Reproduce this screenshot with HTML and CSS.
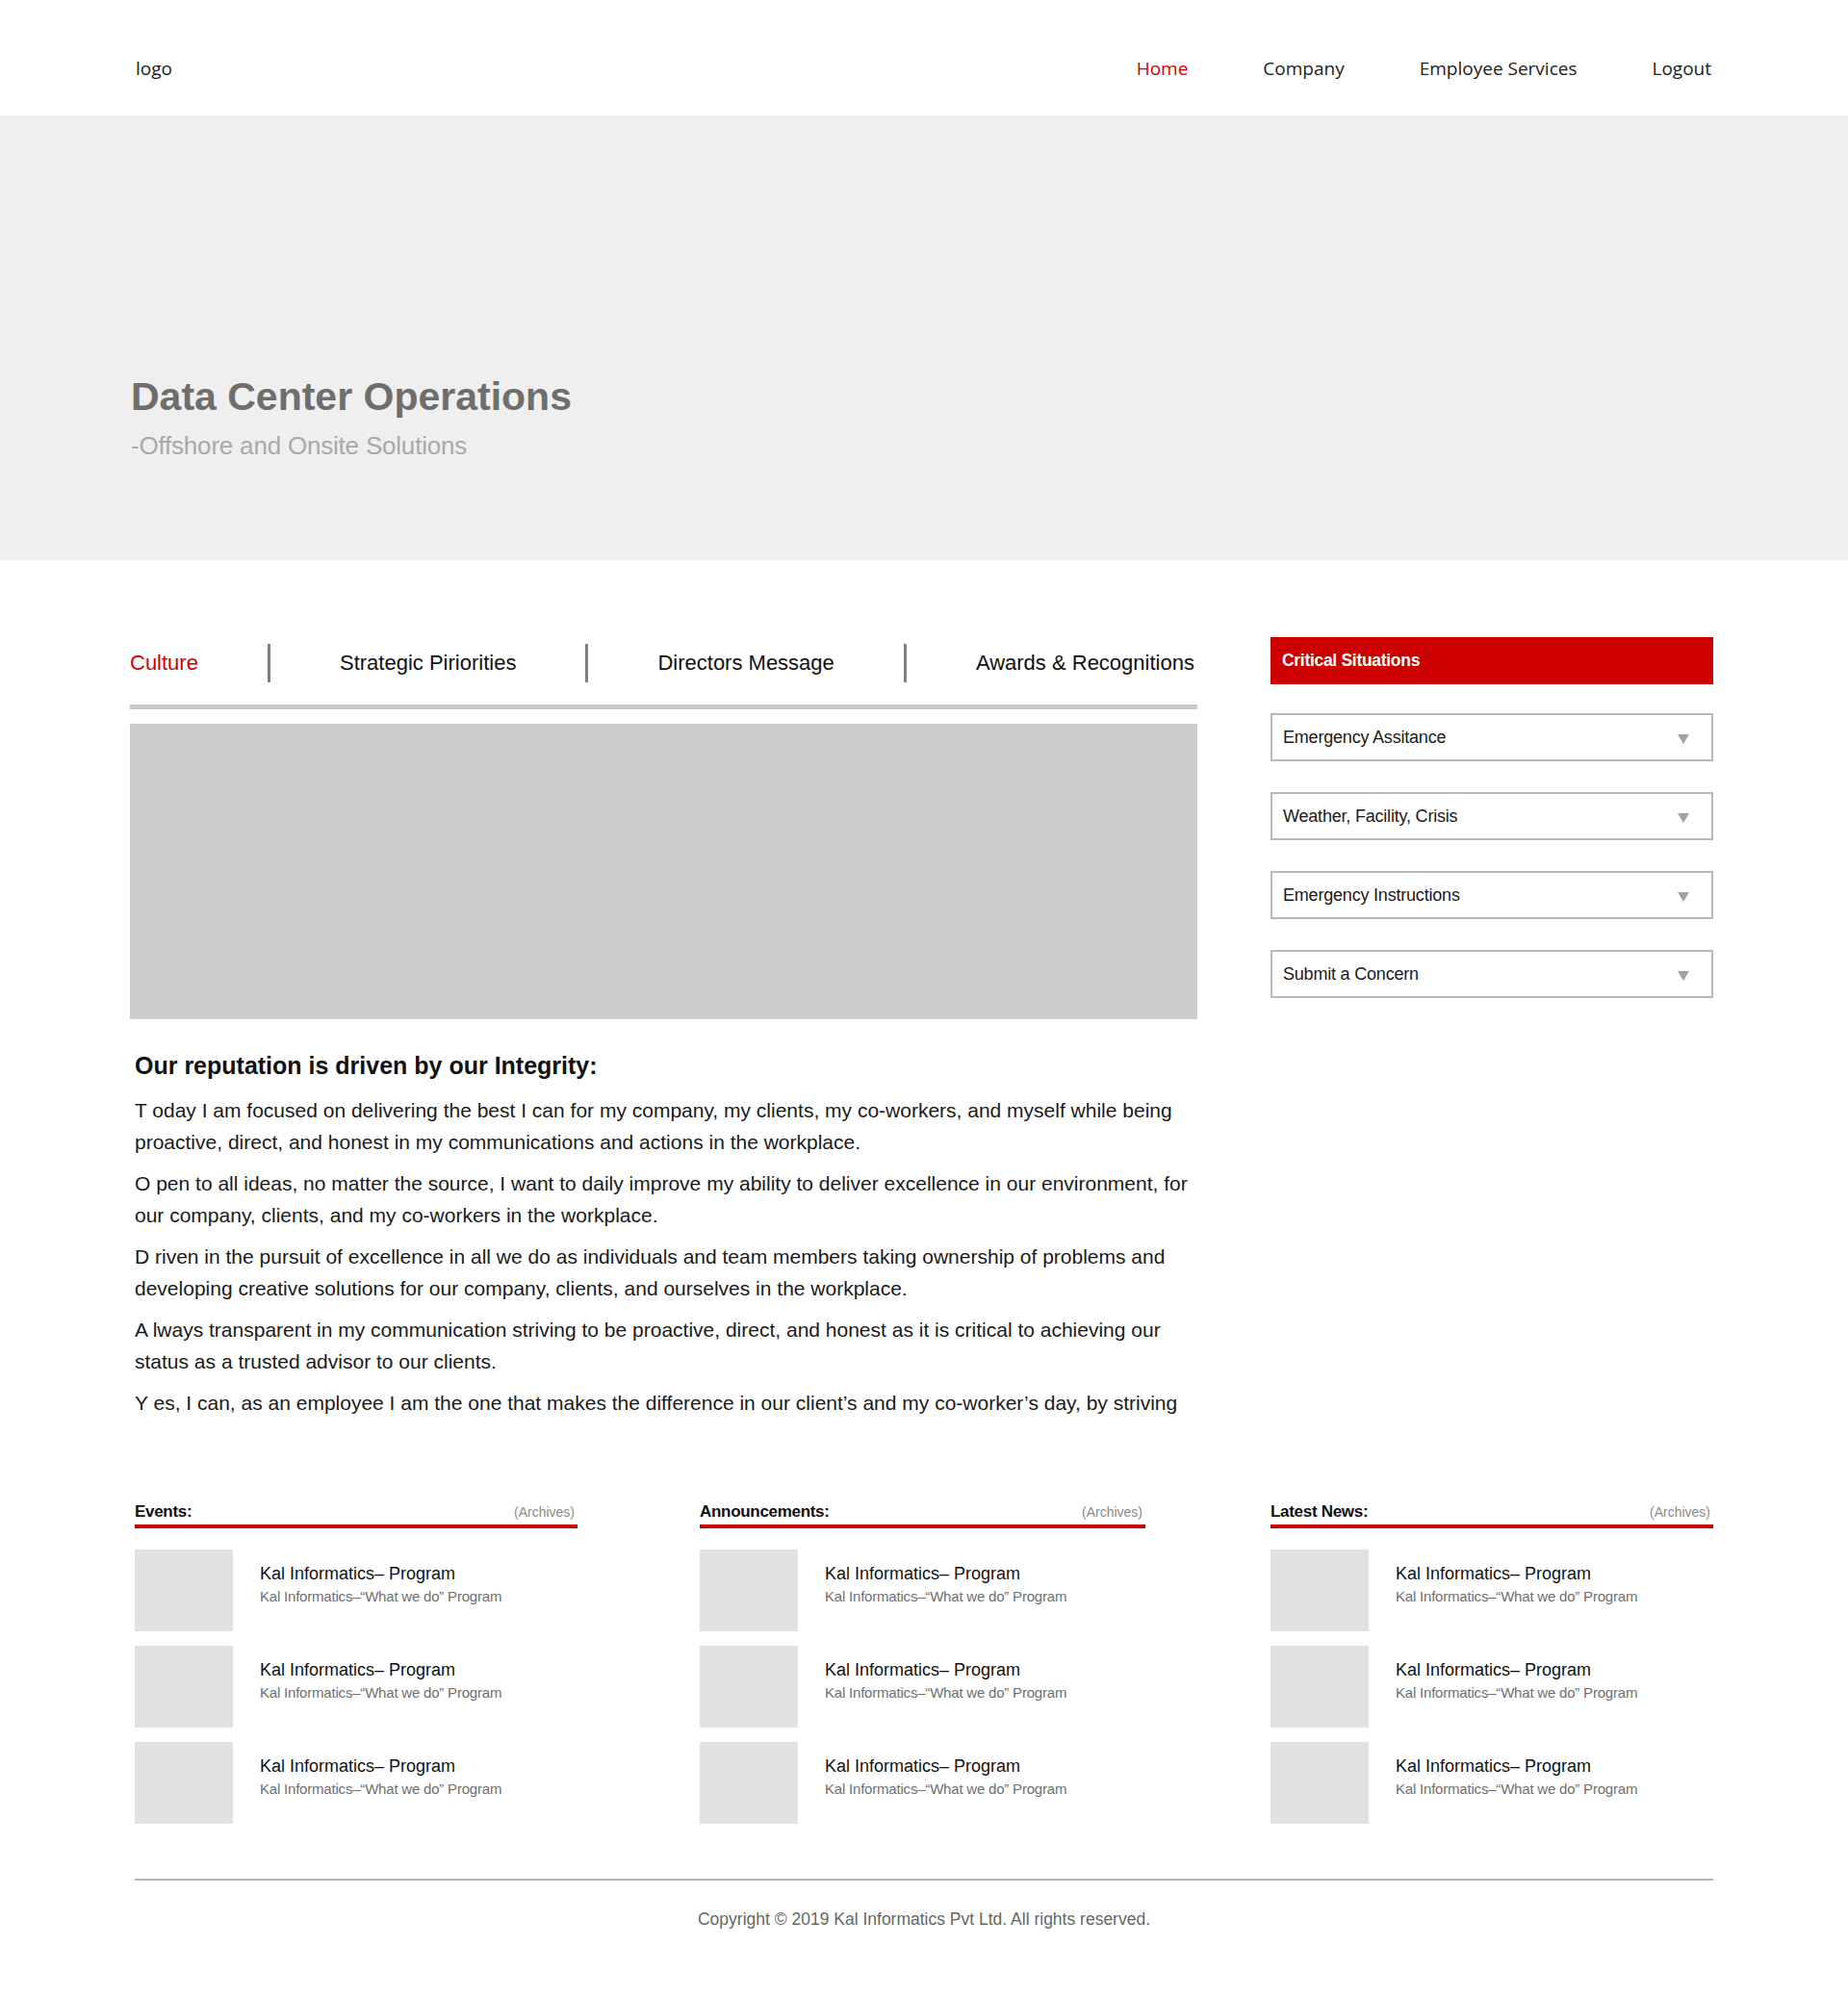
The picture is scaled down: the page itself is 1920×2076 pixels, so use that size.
FILE: index.html
```html
<!DOCTYPE html>
<html lang="en">
<head>
<meta charset="utf-8">
<title>Data Center Operations</title>
<link rel="stylesheet" href="styles.css">
</head>
<body>
<header class="site-header">
  <div class="wrap header-inner">
    <div class="logo">logo</div>
    <nav class="main-nav">
      <a class="nav-link active" href="#">Home</a>
      <a class="nav-link" href="#">Company</a>
      <a class="nav-link" href="#">Employee Services</a>
      <a class="nav-link" href="#">Logout</a>
    </nav>
  </div>
</header>

<section class="hero">
  <div class="wrap hero-inner">
    <h1 class="hero-title">Data Center Operations</h1>
    <p class="hero-sub">-Offshore and Onsite Solutions</p>
  </div>
</section>

<main class="wrap main-row">
  <div class="left-col">
    <div class="tabs">
      <span class="tab active">Culture</span>
      <span class="tab-sep"></span>
      <span class="tab">Strategic Piriorities</span>
      <span class="tab-sep"></span>
      <span class="tab">Directors Message</span>
      <span class="tab-sep"></span>
      <span class="tab">Awards &amp; Recognitions</span>
    </div>
    <div class="feature-img"></div>
    <div class="article">
      <h2 class="article-title">Our reputation is driven by our Integrity:</h2>
      <div class="article-body">
        <p>T oday I am focused on delivering the best I can for my company, my clients, my co-workers, and myself while being proactive, direct, and honest in my communications and actions in the workplace.</p>
        <p>O pen to all ideas, no matter the source, I want to daily improve my ability to deliver excellence in our environment, for our company, clients, and my co-workers in the workplace.</p>
        <p>D riven in the pursuit of excellence in all we do as individuals and team members taking ownership of problems and developing creative solutions for our company, clients, and ourselves in the workplace.</p>
        <p>A lways transparent in my communication striving to be proactive, direct, and honest as it is critical to achieving our status as a trusted advisor to our clients.</p>
        <p>Y es, I can, as an employee I am the one that makes the difference in our client’s and my co-worker’s day, by striving</p>
      </div>
    </div>
  </div>

  <aside class="right-col">
    <div class="crit-head">Critical Situations</div>
    <div class="dropdown"><span>Emergency Assitance</span><span class="caret"></span></div>
    <div class="dropdown"><span>Weather, Facility, Crisis</span><span class="caret"></span></div>
    <div class="dropdown"><span>Emergency Instructions</span><span class="caret"></span></div>
    <div class="dropdown"><span>Submit a Concern</span><span class="caret"></span></div>
  </aside>
</main>

<section class="wrap feeds">
  <div class="feed">
    <div class="feed-head"><span class="feed-title">Events:</span><span class="feed-arch">(Archives)</span></div>
    <div class="feed-item"><div class="thumb"></div><div class="item-text"><div class="item-title">Kal Informatics– Program</div><div class="item-sub">Kal Informatics–“What we do” Program</div></div></div>
    <div class="feed-item"><div class="thumb"></div><div class="item-text"><div class="item-title">Kal Informatics– Program</div><div class="item-sub">Kal Informatics–“What we do” Program</div></div></div>
    <div class="feed-item"><div class="thumb"></div><div class="item-text"><div class="item-title">Kal Informatics– Program</div><div class="item-sub">Kal Informatics–“What we do” Program</div></div></div>
  </div>
  <div class="feed feed-mid">
    <div class="feed-head"><span class="feed-title">Announcements:</span><span class="feed-arch">(Archives)</span></div>
    <div class="feed-item"><div class="thumb"></div><div class="item-text"><div class="item-title">Kal Informatics– Program</div><div class="item-sub">Kal Informatics–“What we do” Program</div></div></div>
    <div class="feed-item"><div class="thumb"></div><div class="item-text"><div class="item-title">Kal Informatics– Program</div><div class="item-sub">Kal Informatics–“What we do” Program</div></div></div>
    <div class="feed-item"><div class="thumb"></div><div class="item-text"><div class="item-title">Kal Informatics– Program</div><div class="item-sub">Kal Informatics–“What we do” Program</div></div></div>
  </div>
  <div class="feed">
    <div class="feed-head"><span class="feed-title">Latest News:</span><span class="feed-arch">(Archives)</span></div>
    <div class="feed-item"><div class="thumb"></div><div class="item-text"><div class="item-title">Kal Informatics– Program</div><div class="item-sub">Kal Informatics–“What we do” Program</div></div></div>
    <div class="feed-item"><div class="thumb"></div><div class="item-text"><div class="item-title">Kal Informatics– Program</div><div class="item-sub">Kal Informatics–“What we do” Program</div></div></div>
    <div class="feed-item"><div class="thumb"></div><div class="item-text"><div class="item-title">Kal Informatics– Program</div><div class="item-sub">Kal Informatics–“What we do” Program</div></div></div>
  </div>
</section>

<footer class="wrap site-footer">
  <p class="copyright">Copyright © 2019 Kal Informatics Pvt Ltd. All rights reserved.</p>
</footer>
</body>
</html>
```

FILE: styles.css
```css
* { box-sizing: border-box; }

html, body {
  margin: 0;
  padding: 0;
  background: #ffffff;
}

body {
  font-family: "Liberation Sans", Arial, sans-serif;
  color: #111111;
}

.wrap {
  width: 1640px;
  margin-left: auto;
  margin-right: auto;
}

/* Header */
.site-header {
  height: 120px;
  background: #ffffff;
}

.header-inner {
  display: flex;
  justify-content: space-between;
  align-items: flex-start;
  padding-top: 58px;
  padding-right: 2px;
  font-family: "Open Sans", "Noto Sans", sans-serif;
  font-size: 19px;
  line-height: 26px;
}

.logo {
  color: #222222;
  padding-left: 1px;
}

.main-nav {
  display: flex;
  gap: 78px;
}

.nav-link {
  color: #222222;
  text-decoration: none;
}

.nav-link.active {
  color: #d40000;
}

/* Hero */
.hero {
  height: 462px;
  background: #efefef;
  padding-top: 268px;
}

.hero-title {
  margin: 0 0 0 -4px;
  font-size: 41px;
  line-height: 49px;
  font-weight: 700;
  color: #6e6e6e;
}

.hero-sub {
  margin: 11px 0 0 -4px;
  font-size: 26px;
  line-height: 30px;
  color: #a9a9a9;
  letter-spacing: -0.2px;
}

/* Main row */
.main-row {
  display: flex;
  justify-content: space-between;
  align-items: flex-start;
  padding-top: 80px;
}

.left-col {
  width: 1109px;
  margin-left: -5px;
}

.tabs {
  display: flex;
  justify-content: space-between;
  align-items: center;
  padding-top: 7px;
  padding-right: 3px;
  padding-bottom: 23px;
  border-bottom: 5px solid #c8c8c8;
}

.tab {
  font-size: 22px;
  line-height: 40px;
  color: #111111;
}

.tab.active {
  color: #cc0000;
}

.tab-sep {
  width: 3px;
  height: 40px;
  background: #808080;
}

.feature-img {
  height: 307px;
  margin-top: 15px;
  background: #cccccc;
}

.article {
  padding-left: 5px;
  padding-right: 4px;
}

.article-title {
  margin: 33px 0 0 0;
  font-size: 25px;
  line-height: 30px;
  font-weight: 700;
  color: #111111;
}

.article-body {
  margin-top: 15px;
}

.article-body p {
  margin: 0 0 10px 0;
  font-size: 21px;
  line-height: 33px;
  color: #1a1a1a;
}

.article-body p:last-child {
  margin-bottom: 0;
}

/* Right column */
.right-col {
  width: 460px;
}

.crit-head {
  height: 49px;
  background: #cc0000;
  color: #ffffff;
  font-size: 17.5px;
  font-weight: 700;
  line-height: 49px;
  padding-left: 12px;
  letter-spacing: -0.3px;
}

.dropdown {
  display: flex;
  justify-content: space-between;
  align-items: center;
  height: 50px;
  margin-top: 32px;
  padding: 0 23px 0 11px;
  border: 2px solid #b9b9b9;
  font-size: 18px;
  color: #1a1a1a;
  letter-spacing: -0.2px;
}

.crit-head + .dropdown {
  margin-top: 30px;
}

.caret {
  width: 0;
  height: 0;
  border-left: 6px solid transparent;
  border-right: 6px solid transparent;
  border-top: 10px solid #a3a3a3;
  margin-top: 3px;
}

/* Feeds */
.feeds {
  display: grid;
  grid-template-columns: repeat(3, 460px);
  justify-content: space-between;
  margin-top: 86px;
}

.feed-mid {
  margin-left: -3px;
}

.feed-head {
  display: flex;
  justify-content: space-between;
  align-items: baseline;
  padding-bottom: 2px;
  border-bottom: 4px solid #cc0000;
  line-height: 22px;
}

.feed-title {
  font-size: 17px;
  font-weight: 700;
  color: #111111;
  letter-spacing: -0.3px;
}

.feed-arch {
  font-size: 14px;
  color: #8a8a8a;
  padding-right: 3px;
}

.feed-item {
  display: flex;
  align-items: flex-start;
  margin-top: 15px;
}

.feed-head + .feed-item {
  margin-top: 22px;
}

.thumb {
  width: 102px;
  height: 85px;
  background: #e1e1e1;
  flex-shrink: 0;
}

.item-text {
  margin-left: 28px;
  padding-top: 13px;
}

.item-title {
  font-size: 18px;
  line-height: 24px;
  color: #111111;
}

.item-sub {
  font-size: 15px;
  line-height: 20px;
  color: #6f6f6f;
  letter-spacing: -0.2px;
  margin-top: 2px;
}

/* Footer */
.site-footer {
  margin-top: 57px;
  border-top: 2px solid #b3b3b3;
  padding-top: 28px;
  padding-bottom: 60px;
}

.copyright {
  margin: 0;
  text-align: center;
  font-size: 17.5px;
  line-height: 24px;
  color: #666666;
}
```
